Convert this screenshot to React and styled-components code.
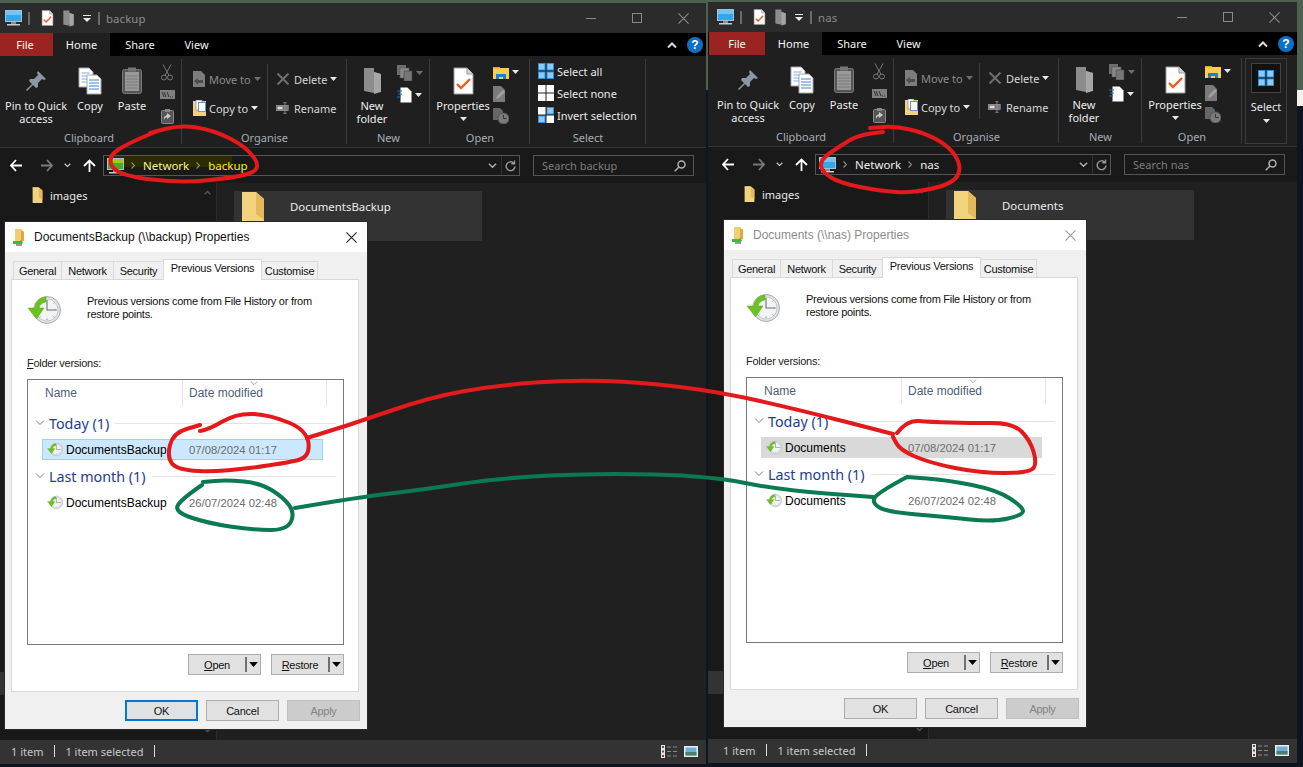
import React from 'react';
import styled, { createGlobalStyle } from 'styled-components';

const Global = createGlobalStyle`
  html, body { margin: 0; padding: 0; background: #0e1420; }
  * { box-sizing: border-box; }
`;

const UI = `"Noto Sans", "Liberation Sans", sans-serif`;
const DLG = `"Liberation Sans", Arial, sans-serif`;

/* ---------- icons ---------- */
const Monitor = ({ tint }) => (
  <svg width="17" height="16" viewBox="0 0 17 16">
    <rect x="0.5" y="0.5" width="16" height="11" fill={tint ? '#3fae2e' : '#35a6ea'} stroke="#9fc4d8" />
    <rect x="1" y="1" width="15" height="4" fill={tint ? '#a5c90f' : '#6fc6f5'} />
    <rect x="6" y="12" width="5" height="2" fill="#8a8f94" />
    <rect x="2" y="14" width="13" height="1.5" fill="#c9ccd0" />
  </svg>
);
const DocCheck = ({ w = 13, h = 16 }) => (
  <svg width={w} height={h} viewBox="0 0 21 28">
    <path d="M1 1h13l6 6v20H1z" fill="#fff" stroke="#9a9a9a" />
    <path d="M14 1v6h6" fill="#d5d5d5" stroke="#9a9a9a" />
    <path d="M4 17l4 4 9-9" fill="none" stroke="#f25a1d" strokeWidth="2.4" />
  </svg>
);
const GrayFolder = ({ w = 13, h = 17 }) => (
  <svg width={w} height={h} viewBox="0 0 19 28">
    <path d="M1 1l10 0 0 4 7 2v18l-7-2v3L1 24z" fill="#8c8c8c" />
    <path d="M11 5l7 2v18l-7 2z" fill="#a6a6a6" />
  </svg>
);
const YellowFolder = ({ w = 13, h = 16, clip }) => (
  <svg width={w} height={h} viewBox="0 0 24 36">
    <path d="M1 1h14l8 7v28H1z" fill="#f3d27e" />
    <path d="M15 1v22l8 6V8z" fill="#e4b95c" />
    {clip ? null : <path d="M1 1h14v2H1z" fill="#f8e2a4" />}
  </svg>
);
const Pin = () => (
  <svg width="22" height="22" viewBox="0 0 22 22">
    <path d="M13 1l8 8-2 1-2-1-4 4 0 4-2 1-3-3-6 6-1-1 6-6-3-3 1-2 4 0 4-4-1-2z" fill="#8d97a3" />
  </svg>
);
const CopyIcon = () => (
  <svg width="24" height="28" viewBox="0 0 24 28">
    <path d="M1 1h10l4 4v15H1z" fill="#fff" stroke="#a6a6a6" />
    <path d="M3.5 6h8M3.5 9h8M3.5 12h8M3.5 15h8" stroke="#7db0e8" />
    <path d="M9 8h10l4 4v15H9z" fill="#fff" stroke="#a6a6a6" />
    <path d="M11 13h10M11 16h10M11 19h10M11 22h10" stroke="#3f85dc" />
  </svg>
);
const Paste = () => (
  <svg width="20" height="27" viewBox="0 0 20 27">
    <rect x="0.5" y="2.5" width="19" height="24" rx="2" fill="#555" stroke="#777" />
    <rect x="3" y="5" width="14" height="19" fill="#999" />
    <path d="M4 9h12M4 12h12M4 15h12M4 18h12M4 21h12" stroke="#7a7a7a" />
    <rect x="6" y="0.5" width="8" height="4" fill="#777" />
  </svg>
);
const Scissors = () => (
  <svg width="12" height="17" viewBox="0 0 12 17" fill="none" stroke="#787878">
    <circle cx="3" cy="13.5" r="2.5" />
    <circle cx="9" cy="13.5" r="2.5" />
    <path d="M8 11.5L2 0.5M4 11.5L10 0.5" />
  </svg>
);
const PathIcon = () => (
  <svg width="15" height="9" viewBox="0 0 15 9">
    <rect width="15" height="9" fill="#808080" />
    <path d="M2 2l2 5M4 2l2 5M7 2l2 5M10 7h1M12 7h1" stroke="#333" />
  </svg>
);
const ShortcutIcon = () => (
  <svg width="13" height="15" viewBox="0 0 13 15">
    <rect x="0.5" y="1.5" width="12" height="13" rx="1" fill="#555" stroke="#888" />
    <rect x="4" y="0" width="5" height="3" fill="#888" />
    <path d="M3 11l0-3 3-2 0-2 4 3-4 3 0-2-2 1z" fill="#ccc" />
  </svg>
);
const MoveIcon = () => (
  <svg width="14" height="16" viewBox="0 0 14 16">
    <path d="M1 0h8l4 4v12H1z" fill="#7d7d7d" />
    <path d="M2 10l4-3v2h5v3H6v2z" fill="#4d4d4d" />
  </svg>
);
const CopyToIcon = () => (
  <svg width="13" height="16" viewBox="0 0 13 16">
    <rect y="1" width="13" height="15" fill="#f3d27e" />
    <rect x="3" y="0" width="6" height="10" fill="#fff" stroke="#888" strokeWidth="0.7" />
    <rect x="5.5" y="2.5" width="7" height="9" fill="#fff" stroke="#4d7fc0" strokeWidth="0.8" />
  </svg>
);
const XIcon = () => (
  <svg width="12" height="12" viewBox="0 0 12 12" stroke="#6f6f6f" strokeWidth="2">
    <path d="M0.5 0.5l11 11M11.5 0.5l-11 11" />
  </svg>
);
const RenameIcon = () => (
  <svg width="16" height="14" viewBox="0 0 16 14">
    <rect y="4" width="15" height="6" fill="#777" stroke="#999" />
    <rect x="2" y="5.5" width="6" height="3" fill="#ddd" />
    <path d="M11 0.5v13M9 0.5h4M9 13.5h4" stroke="#999" />
  </svg>
);
const CopyPlain = () => (
  <svg width="16" height="16" viewBox="0 0 16 16">
    <rect x="0" y="0" width="9" height="10" fill="#6e6e6e" />
    <rect x="3" y="3" width="9" height="10" fill="#8a8a8a" stroke="#555" strokeWidth="0.6" />
    <rect x="7" y="6" width="8" height="10" fill="#777" stroke="#444" strokeWidth="0.6" />
  </svg>
);
const NewDoc = () => (
  <svg width="15" height="16" viewBox="0 0 15 16">
    <path d="M3.5 0.5h7l4 4v11h-11z" fill="#fff" />
    <path d="M0 4h5M1 7h4M0 10h4" stroke="#1e73c8" strokeWidth="1.1" />
  </svg>
);
const ExplorerIcon = () => (
  <svg width="16" height="13" viewBox="0 0 16 13">
    <path d="M0 1h6l1 1h9v11H0z" fill="#f6ce54" />
    <rect y="1" width="7" height="1.5" fill="#e0a92e" />
    <path d="M3 8h10v5h-3v-2H6v2H3z" fill="#1c7fd6" />
  </svg>
);
const EditDoc = () => (
  <svg width="13" height="16" viewBox="0 0 13 16">
    <path d="M0 0h8l4 4v12H0z" fill="#7a7a7a" />
    <path d="M3 13l1-3 6-6 2 2-6 6z" fill="#a0a0a0" />
  </svg>
);
const HistoryDoc = () => (
  <svg width="16" height="16" viewBox="0 0 16 16">
    <path d="M0 0h7l3 3v9H0z" fill="#666" />
    <circle cx="10.5" cy="10.5" r="5.5" fill="#7b7b7b" stroke="#555" />
    <path d="M10.5 7v3.5h3" stroke="#333" fill="none" />
  </svg>
);
const Grid = ({ fills }) => (
  <svg width="16" height="16" viewBox="0 0 16 16">
    {[[0, 0], [8.5, 0], [0, 8.5], [8.5, 8.5]].map(([x, y], i) => (
      <rect key={i} x={x + 0.5} y={y + 0.5} width="6.5" height="6.5" fill={fills[i]} stroke={fills[i] === '#fff' ? '#fff' : '#2e8fe0'} />
    ))}
  </svg>
);
const Caret = ({ color = '#e8e8e8', w = 7, h = 4 }) => (
  <svg width={w} height={h} viewBox="0 0 7 4"><path d="M0 0h7L3.5 4z" fill={color} /></svg>
);
const QatArrow = () => (
  <svg width="8" height="7" viewBox="0 0 8 7"><path d="M0 0h8v1H0zM0 3h8L4 7z" fill="#e8e8e8" /></svg>
);
const Arrow = ({ dir = 'left', color = '#fff' }) => {
  const d = { left: 'M1 6.5h11M6 1L1 6.5 6 12', right: 'M1 6.5h11M7 1l5 5.5L7 12', up: 'M6.5 13V2M1 7l5.5-5.5L12 7' }[dir];
  return <svg width="13" height="14" viewBox="0 0 13 14" fill="none" stroke={color} strokeWidth="1.8"><path d={d} /></svg>;
};
const Chevron = ({ up, color = '#d8d8d8', w = 7, h = 5, sw = 1.6 }) => (
  <svg width={w} height={h} viewBox="0 0 10 6" fill="none" stroke={color} strokeWidth={sw}>
    <path d={up ? 'M1 5.5L5 1.5l4 4' : 'M1 .5l4 4 4-4'} />
  </svg>
);
const Crumb = () => (
  <svg width="4" height="7" viewBox="0 0 4 7"><path d="M0.5 0.5l3 3-3 3" fill="none" stroke="#8a8a8a" strokeWidth="1.2" /></svg>
);
const Refresh = () => (
  <svg width="11" height="12" viewBox="0 0 11 12" fill="none" stroke="#9a9a9a" strokeWidth="1.4">
    <path d="M8.8 3.2A4.4 4.4 0 1 0 10 6.5" /><path d="M9.5 0.5v3.2H6.3" />
  </svg>
);
const Search = () => (
  <svg width="12" height="12" viewBox="0 0 12 12" fill="none" stroke="#b0b0b0" strokeWidth="1.5">
    <circle cx="7.5" cy="4.5" r="3.5" /><path d="M5 7l-4.3 4.3" />
  </svg>
);
const DetailsIcon = () => (
  <svg width="16" height="13" viewBox="0 0 16 13">
    <rect width="4" height="13" fill="#e6e6e6" />
    <rect x="1" y="1" width="2" height="2" fill="#555" /><rect x="1" y="5.5" width="2" height="2" fill="#555" /><rect x="1" y="10" width="2" height="2" fill="#a03030" />
    <path d="M6 2h4M12 2h4M6 6.5h4M12 6.5h4M6 11h4M12 11h4" stroke="#8a8a8a" />
  </svg>
);
const ThumbIcon = () => (
  <svg width="14" height="11" viewBox="0 0 14 11">
    <rect width="14" height="11" fill="#e8eef4" />
    <rect x="1.5" y="1.5" width="11" height="8" fill="#6fb0d8" />
    <rect x="1.5" y="6" width="11" height="3.5" fill="#4b7f68" />
  </svg>
);
const ClockIcon = ({ w, h }) => (
  <svg width={w} height={h} viewBox="0 0 34 30">
    <circle cx="20" cy="15" r="13.5" fill="#dfe3e6" stroke="#a9aeb2" />
    <circle cx="20" cy="15" r="11" fill="#f1f3f4" stroke="#c6cacd" />
    <path d="M30 15h-1.5M20 25v-1.5M12.5 22.5l1-1M27.5 22.5l-1-1M27.5 7.5l-1 1" stroke="#8d9296" />
    <path d="M20 5v10h9" fill="none" stroke="#6a7075" strokeWidth="1.1" />
    <path d="M19 2C12 3 8.5 7 8 13H1l8.5 11L17 13h-5c.5-3 3-5.5 7-6z" fill="#6cc21f" stroke="#55a315" strokeWidth="0.5" />
  </svg>
);
const DialogFolder = () => (
  <svg width="14" height="17" viewBox="0 0 14 17">
    <path d="M2 0h6l3 3v9H2z" fill="#f1cf72" />
    <path d="M8 1v12l3-1V3z" fill="#dca83f" />
    <path d="M0 12h7l1-1 2 2.5-2 2.5-1-1H0z" fill="#46b53b" />
    <path d="M3 15h6v2H3z" fill="#9a9a9a" />
  </svg>
);
const CloseX = ({ color }) => (
  <svg width="11" height="11" viewBox="0 0 11 11" stroke={color} strokeWidth="1.1"><path d="M0.4 0.4l10.2 10.2M10.6 0.4L0.4 10.6" /></svg>
);

/* ---------- explorer window ---------- */
const Desktop = styled.div`
  position: relative;
  width: 1303px;
  height: 767px;
  overflow: hidden;
  background: linear-gradient(#4c614f 0 90px, #0e1420 90px);
`;
const Sticker = styled.div`
  position: absolute;
  left: 1297px;
  top: 90px;
  width: 6px;
  height: 16px;
  background: #f4f2ee;
`;
const Win = styled.div`
  position: absolute;
  left: ${p => p.$x}px;
  top: ${p => p.$y}px;
  width: ${p => p.$w}px;
  height: 761px;
  display: flex;
  flex-direction: column;
  background: #202020;
  font-family: ${UI};
  font-size: 11px;
  color: #e8e8e8;
`;
const TitleBar = styled.div`
  height: 30px;
  flex: none;
  display: flex;
  align-items: center;
  padding-left: 9px;
  background: #2b2b2b;
`;
const QatSep = styled.span`
  width: 2px;
  height: 13px;
  margin-left: ${p => p.$l || 0}px;
  background: #6a6a6a;
`;
const QatSlot = styled.span`
  display: flex;
  margin-left: ${p => p.$l}px;
`;
const WinTitle = styled.span`
  margin-left: 6px;
  font-size: 11.4px;
  letter-spacing: 0.1px;
  color: #8b8b8b;
  flex: 1;
`;
const WinButton = styled.span`
  width: 46px;
  display: flex;
  justify-content: center;
  align-items: center;
  height: 30px;
`;
const MinGlyph = styled.span`
  width: 10px;
  height: 1px;
  background: #8a8a8a;
`;
const MaxGlyph = styled.span`
  width: 10px;
  height: 10px;
  border: 1px solid #8a8a8a;
`;
const TabRow = styled.div`
  height: 23px;
  flex: none;
  display: flex;
  align-items: stretch;
  padding-left: 1px;
  background: #000;
`;
const FileTab = styled.div`
  width: 56px;
  display: flex;
  align-items: center;
  justify-content: center;
  background: #9b2423;
  color: #f2f2f2;
  padding-bottom: 1px;
`;
const RibbonTab = styled.div`
  width: ${p => p.$w}px;
  display: flex;
  align-items: center;
  justify-content: center;
  padding-bottom: 1px;
  background: ${p => (p.$active ? '#1f1f1f' : 'transparent')};
  color: #f2f2f2;
`;
const TabSpacer = styled.div`
  flex: 1;
`;
const RibbonTools = styled.div`
  display: flex;
  align-items: center;
  gap: 10px;
  padding-right: 3px;
`;
const HelpDot = styled.span`
  width: 16px;
  height: 16px;
  border-radius: 50%;
  background: #0f6fc6;
  color: #fff;
  font: bold 12px/16px ${DLG};
  text-align: center;
`;
const Ribbon = styled.div`
  height: 92px;
  flex: none;
  display: flex;
  padding-top: 3px;
  background: #1f1f1f;
  border-bottom: 1px solid #333;
`;
const Group = styled.div`
  position: relative;
  width: ${p => p.$w}px;
  display: flex;
  flex-direction: column;
  &::after {
    content: '';
    position: absolute;
    top: 0;
    right: 0;
    bottom: 3px;
    width: 1px;
    background: #3c3c3c;
  }
`;
const GroupBody = styled.div`
  flex: 1;
  display: flex;
  padding: 5px 0 0 ${p => p.$pl || 0}px;
`;
const GroupLabel = styled.div`
  height: 18px;
  line-height: 18px;
  text-align: center;
  color: #a5aeb5;
`;
const Big = styled.div`
  width: ${p => p.$w}px;
  display: flex;
  flex-direction: column;
  align-items: center;
  text-align: center;
  line-height: 13px;
  color: #ececec;
  white-space: nowrap;
`;
const BigIcon = styled.div`
  height: 33px;
  margin-bottom: 2px;
  display: flex;
  align-items: center;
`;
const BigCaret = styled.div`
  display: flex;
  margin-top: 5px;
`;
const SmallCol = styled.div`
  width: ${p => p.$w}px;
  padding-top: ${p => p.$pt || 0}px;
  display: flex;
  flex-direction: column;
  gap: ${p => p.$gap || 0}px;
  align-items: ${p => p.$align || 'center'};
`;
const SmallIcon = styled.div`
  height: 16px;
  display: flex;
  align-items: center;
  gap: 3px;
`;
const OrgCol = styled.div`
  display: flex;
  flex-direction: column;
  gap: 13px;
  width: ${p => p.$w}px;
  padding-top: 7px;
  padding-left: ${p => p.$pl}px;
  height: 56px;
  border-right: ${p => (p.$sep ? '1px solid #3c3c3c' : 'none')};
`;
const OrgRow = styled.div`
  height: 16px;
  display: flex;
  align-items: center;
  gap: 3px;
  color: ${p => (p.$dim ? '#8c8c8c' : '#d8d8d8')};
`;
const OrgIcon = styled.span`
  display: flex;
  width: ${p => p.$w || 14}px;
  margin-right: ${p => p.$gap || 0}px;
  justify-content: center;
`;
const SelectRow = styled.div`
  height: 16px;
  display: flex;
  align-items: center;
  gap: 3px;
`;
const SelectCol = styled.div`
  display: flex;
  flex-direction: column;
  gap: 6px;
  margin-top: -1px;
`;
const Collapsed = styled.div`
  width: 42px;
  margin-left: 3px;
  height: 86px;
  border: 1px solid #3c3c3c;
  display: flex;
  flex-direction: column;
  align-items: center;
  padding-top: 4px;
`;
const CollapsedIcon = styled.div`
  width: 30px;
  height: 30px;
  display: flex;
  align-items: center;
  justify-content: center;
  background: #111;
  border: 1px solid #444;
  margin-bottom: 6px;
`;
const NavRow = styled.div`
  height: 35px;
  flex: none;
  display: flex;
  align-items: center;
  background: #191919;
  padding-right: 12px;
`;
const NavBtn = styled.span`
  display: flex;
  justify-content: center;
  width: ${p => p.$w}px;
`;
const Address = styled.div`
  flex: 1;
  height: 21px;
  margin-left: 4px;
  display: flex;
  align-items: center;
  padding-left: 3px;
  border: 1px solid #555;
  background: #191919;
`;
const Highlight = styled.div`
  display: flex;
  align-items: center;
  gap: 7px;
  flex: 1;
  height: 100%;
  font-size: 11.5px;
  background: ${p => (p.$on ? 'linear-gradient(#2c2c00, #2c2c00) 0 0 / 125px 60% no-repeat' : 'none')};
`;
const CrumbLink = styled.span`
  color: ${p => p.$color || '#ededed'};
  line-height: 19px;
  padding-left: 1px;
`;
const AddrEnd = styled.div`
  display: flex;
  align-items: center;
  height: 100%;
`;
const AddrChevron = styled.span`
  width: 17px;
  display: flex;
  justify-content: center;
`;
const AddrRefresh = styled.span`
  width: 18px;
  height: 100%;
  display: flex;
  align-items: center;
  justify-content: center;
  border-left: 1px solid #333;
`;
const SearchBox = styled.div`
  width: 161px;
  height: 21px;
  margin-left: 13px;
  display: flex;
  align-items: center;
  justify-content: space-between;
  padding: 0 7px 0 8px;
  border: 1px solid #555;
  color: #7d7d7d;
`;
const Main = styled.div`
  flex: 1;
  display: flex;
  min-height: 0;
  background: #202020;
`;
const NavPane = styled.div`
  width: 221px;
  flex: none;
  display: flex;
  background: #191919;
  border-right: 1px solid #2c2c2c;
`;
const NavList = styled.div`
  flex: 1;
  display: flex;
  flex-direction: column;
  padding: 3px 0 45px 35px;
`;
const NavItem = styled.div`
  height: 18px;
  display: flex;
  align-items: center;
  gap: 6px;
`;
const NavSelected = styled.div`
  height: 23px;
  margin: auto 0 0 -35px;
  background: #333;
`;
const ScrollCol = styled.div`
  width: 17px;
  display: flex;
  flex-direction: column;
  justify-content: space-between;
  align-items: center;
  padding: 7px 0;
`;
const Content = styled.div`
  flex: 1;
  padding: 8px 17px;
`;
const Tile = styled.div`
  width: 248px;
  height: 50px;
  display: flex;
  padding-left: 7px;
  background: #333;
`;
const TileName = styled.span`
  margin-left: 25px;
  margin-top: 8px;
  font-size: 11.4px;
  color: #ececec;
`;
const Status = styled.div`
  height: 24px;
  flex: none;
  display: flex;
  align-items: center;
  padding: 0 8px 2px 15px;
  background: #333;
  color: #c8c8c8;
`;
const StatusSep = styled.span`
  width: 1px;
  height: 12px;
  margin: 0 ${p => p.$r || 0}px 0 ${p => p.$l || 0}px;
  background: #ddd;
`;
const StatusEnd = styled.div`
  margin-left: auto;
  display: flex;
  align-items: center;
  gap: 7px;
`;

const OrganiseGroup = () => (
  <Group $w={165}>
    <GroupBody $pl={10}>
      <OrgCol $w={76} $pl={0} $sep>
        <OrgRow $dim>
          <OrgIcon><MoveIcon /></OrgIcon>Move to <Caret color="#6e6e6e" />
        </OrgRow>
        <OrgRow>
          <OrgIcon><CopyToIcon /></OrgIcon>Copy to <Caret />
        </OrgRow>
      </OrgCol>
      <OrgCol $w={78} $pl={8}>
        <OrgRow>
          <OrgIcon $w={13} $gap={2}><XIcon /></OrgIcon>Delete <Caret />
        </OrgRow>
        <OrgRow>
          <OrgIcon $w={13} $gap={2}><RenameIcon /></OrgIcon>Rename
        </OrgRow>
      </OrgCol>
    </GroupBody>
    <GroupLabel>Organise</GroupLabel>
  </Group>
);

const Explorer = ({ x, y, w, name, item, marked, collapsed }) => (
  <Win $x={x} $y={y} $w={w}>
    <TitleBar>
      <Monitor />
      <QatSep $l={6} />
      <QatSlot $l={11}><DocCheck /></QatSlot>
      <QatSlot $l={8}><GrayFolder /></QatSlot>
      <QatSlot $l={8}><QatArrow /></QatSlot>
      <QatSep $l={7} />
      <WinTitle>{name}</WinTitle>
      <WinButton><MinGlyph /></WinButton>
      <WinButton><MaxGlyph /></WinButton>
      <WinButton><CloseX color="#8a8a8a" /></WinButton>
    </TitleBar>
    <TabRow>
      <FileTab>File</FileTab>
      <RibbonTab $w={57} $active>Home</RibbonTab>
      <RibbonTab $w={60}>Share</RibbonTab>
      <RibbonTab $w={53}>View</RibbonTab>
      <TabSpacer />
      <RibbonTools>
        <Chevron up color="#dcdcdc" w={10} h={6} sw={2} />
        <HelpDot>?</HelpDot>
      </RibbonTools>
    </TabRow>
    <Ribbon>
      <Group $w={186}>
        <GroupBody $pl={8}>
          <Big $w={64}><BigIcon><Pin /></BigIcon>Pin to Quick<br />access</Big>
          <Big $w={44}><BigIcon><CopyIcon /></BigIcon>Copy</Big>
          <Big $w={40}><BigIcon><Paste /></BigIcon>Paste</Big>
          <SmallCol $w={30} $gap={6}>
            <SmallIcon><Scissors /></SmallIcon>
            <SmallIcon><PathIcon /></SmallIcon>
            <SmallIcon><ShortcutIcon /></SmallIcon>
          </SmallCol>
        </GroupBody>
        <GroupLabel>Clipboard</GroupLabel>
      </Group>
      <OrganiseGroup />
      <Group $w={83}>
        <GroupBody>
          <Big $w={50}><BigIcon><GrayFolder w={19} h={28} /></BigIcon>New<br />folder</Big>
          <SmallCol $w={30} $gap={6} $pt={1} $align="flex-start">
            <SmallIcon><CopyPlain /><Caret color="#6e6e6e" /></SmallIcon>
            <SmallIcon><NewDoc /><Caret /></SmallIcon>
          </SmallCol>
        </GroupBody>
        <GroupLabel>New</GroupLabel>
      </Group>
      <Group $w={100}>
        <GroupBody $pl={3}>
          <Big $w={60}>
            <BigIcon><DocCheck w={21} h={28} /></BigIcon>Properties
            <BigCaret><Caret /></BigCaret>
          </Big>
          <SmallCol $w={30} $gap={6} $align="flex-start">
            <SmallIcon><ExplorerIcon /><Caret /></SmallIcon>
            <SmallIcon><EditDoc /></SmallIcon>
            <SmallIcon><HistoryDoc /></SmallIcon>
          </SmallCol>
        </GroupBody>
        <GroupLabel>Open</GroupLabel>
      </Group>
      {collapsed ? (
        <Collapsed>
          <CollapsedIcon><Grid fills={['#8fcaf5', '#8fcaf5', '#8fcaf5', '#8fcaf5']} /></CollapsedIcon>
          <span>Select</span>
          <BigCaret><Caret /></BigCaret>
        </Collapsed>
      ) : (
        <Group $w={116}>
          <GroupBody $pl={8}>
            <SelectCol>
              <SelectRow><Grid fills={['#8fcaf5', '#8fcaf5', '#8fcaf5', '#8fcaf5']} />Select all</SelectRow>
              <SelectRow><Grid fills={['#fff', '#fff', '#fff', '#fff']} />Select none</SelectRow>
              <SelectRow><Grid fills={['#fff', '#8fcaf5', '#8fcaf5', '#fff']} />Invert selection</SelectRow>
            </SelectCol>
          </GroupBody>
          <GroupLabel>Select</GroupLabel>
        </Group>
      )}
    </Ribbon>
    <NavRow>
      <NavBtn $w={40}><Arrow /></NavBtn>
      <NavBtn $w={20}><Arrow dir="right" color="#7a7a7a" /></NavBtn>
      <NavBtn $w={23}><Chevron /></NavBtn>
      <NavBtn $w={20}><Arrow dir="up" /></NavBtn>
      <Address>
        <Highlight $on={marked}>
          <Monitor tint={marked} />
          <Crumb />
          <CrumbLink $color={marked ? '#f6f68a' : undefined}>Network</CrumbLink>
          <Crumb />
          <CrumbLink $color={marked ? '#ffee00' : undefined}>{name}</CrumbLink>
        </Highlight>
        <AddrEnd>
          <AddrChevron><Chevron color="#b0b0b0" w={9} h={6} /></AddrChevron>
          <AddrRefresh><Refresh /></AddrRefresh>
        </AddrEnd>
      </Address>
      <SearchBox>Search {name}<Search /></SearchBox>
    </NavRow>
    <Main>
      <NavPane>
        <NavList>
          <NavItem><YellowFolder />images</NavItem>
          <NavSelected />
        </NavList>
        <ScrollCol>
          <Chevron up color="#555" w={7} h={5} sw={2} />
          <Chevron color="#555" w={7} h={5} sw={2} />
        </ScrollCol>
      </NavPane>
      <Content>
        <Tile>
          <YellowFolder w={24} h={36} clip />
          <TileName>{item}</TileName>
        </Tile>
      </Content>
    </Main>
    <Status>
      1 item<StatusSep $l={11} $r={10} />1 item selected<StatusSep $l={10} />
      <StatusEnd><DetailsIcon /><ThumbIcon /></StatusEnd>
    </Status>
  </Win>
);

/* ---------- properties dialog ---------- */
const Dialog = styled.div`
  position: absolute;
  left: ${p => p.$x}px;
  top: ${p => p.$y}px;
  width: 362px;
  height: 507px;
  display: flex;
  flex-direction: column;
  background: #f0f0f0;
  font-family: ${DLG};
  font-size: 11px;
  letter-spacing: -0.27px;
  color: #111;
  box-shadow: 0 0 0 1px #2a2a2a;
`;
const DialogTitle = styled.div`
  height: 30px;
  flex: none;
  display: flex;
  align-items: center;
  padding: 0 10px 0 8px;
  background: #fff;
`;
const DialogName = styled.span`
  flex: 1;
  margin-left: 7px;
  font-size: 12px;
  letter-spacing: 0;
  color: ${p => (p.$dim ? '#8c8c8c' : '#111')};
`;
const DlgTabs = styled.div`
  display: flex;
  align-items: flex-end;
  height: 28px;
  padding-left: 8px;
  position: relative;
  z-index: 1;
`;
const DlgTab = styled.div`
  width: ${p => p.$w}px;
  height: ${p => (p.$on ? 21 : 19)}px;
  display: flex;
  align-items: center;
  justify-content: center;
  background: ${p => (p.$on ? '#fff' : '#f0f0f0')};
  border: 1px solid #d9d9d9;
  border-bottom: ${p => (p.$on ? 'none' : '1px solid #d9d9d9')};
  margin-right: -1px;
  padding: ${p => (p.$on ? '0 0 4px' : '1px 0 0')};
`;
const Panel = styled.div`
  margin: -1px 8px 0 6px;
  height: 413px;
  flex: none;
  padding: 15px 14px 0 15px;
  background: #fff;
  border: 1px solid #d9d9d9;
`;
const Intro = styled.div`
  display: flex;
  gap: 26px;
  height: 61px;
`;
const IntroText = styled.div`
  line-height: 13px;
  width: 240px;
`;
const FieldLabel = styled.div`
  height: 23px;
  line-height: 14px;
  color: #222;
`;
const UnderlineKey = styled.span`
  text-decoration: ${p => (p.$on ? 'underline' : 'none')};
`;
const List = styled.div`
  height: 266px;
  border: 1px solid #7a7a7a;
  background: #fff;
`;
const ListHead = styled.div`
  height: 26px;
  display: grid;
  grid-template-columns: 155px 144px 1fr;
  font-size: 12px;
  letter-spacing: 0;
  color: #4c607a;
`;
const HeadCell = styled.div`
  position: relative;
  padding: 6px 0 0 ${p => p.$pl}px;
  border-right: 1px solid #e5e5e5;
  &:last-child { border-right: none; }
`;
const SortMark = styled.span`
  position: absolute;
  left: 67px;
  top: 1px;
  display: flex;
`;
const GroupHead = styled.div`
  display: flex;
  align-items: center;
  height: 20px;
  margin-top: ${p => p.$mt}px;
  margin-right: 7px;
  padding: 0 0 2px 7px;
  gap: 4px;
  color: #1d3c96;
  font-family: ${UI};
  font-size: 14.3px;
  letter-spacing: 0;
`;
const GroupLine = styled.span`
  flex: 1;
  height: 1px;
  margin-left: 2px;
  background: #e3e3e3;
`;
const Row = styled.div`
  margin: 5px 0 0 14px;
  width: 281px;
  height: 21px;
  display: grid;
  grid-template-columns: 146px 1fr;
  align-items: center;
  background: ${p => (p.$sel === 'blue' ? '#cce8ff' : p.$sel === 'gray' ? '#d9d9d9' : 'transparent')};
  border: 1px solid ${p => (p.$sel === 'blue' ? '#99d1ff' : 'transparent')};
`;
const RowName = styled.div`
  display: flex;
  align-items: center;
  gap: 3px;
  padding-left: 4px;
  font-size: 12px;
  letter-spacing: 0;
  color: #000;
`;
const RowDate = styled.div`
  font-size: 11.3px;
  letter-spacing: 0;
  color: #6d6d6d;
`;
const PanelButtons = styled.div`
  display: flex;
  justify-content: flex-end;
  gap: 10px;
  margin-top: 9px;
`;
const SplitBtn = styled.div`
  width: 73px;
  height: 21px;
  display: flex;
  align-items: center;
  background: #e1e1e1;
  border: 1px solid #adadad;
`;
const SplitLabel = styled.span`
  flex: 1;
  text-align: center;
`;
const SplitArrow = styled.span`
  width: 15px;
  height: 15px;
  display: flex;
  align-items: center;
  justify-content: center;
  border-left: 2px solid #707070;
`;
const DlgFooter = styled.div`
  flex: 1;
  display: flex;
  justify-content: flex-end;
  align-items: flex-start;
  gap: 8px;
  padding: 8px 7px 0 0;
`;
const Btn = styled.div`
  width: 73px;
  height: 21px;
  display: flex;
  align-items: center;
  justify-content: center;
  background: ${p => (p.$off ? '#cccccc' : '#e1e1e1')};
  border: ${p => (p.$primary ? '2px solid #0078d7' : p.$off ? '1px solid #bfbfbf' : '1px solid #adadad')};
  color: ${p => (p.$off ? '#838383' : '#111')};
`;

const PropsDialog = ({ x, y, title, name, dim, sel, accel }) => (
  <Dialog $x={x} $y={y}>
    <DialogTitle>
      <DialogFolder />
      <DialogName $dim={dim}>{title}</DialogName>
      <CloseX color={dim ? '#9a9a9a' : '#222'} />
    </DialogTitle>
    <DlgTabs>
      <DlgTab $w={49}>General</DlgTab>
      <DlgTab $w={53}>Network</DlgTab>
      <DlgTab $w={51}>Security</DlgTab>
      <DlgTab $w={99} $on>Previous Versions</DlgTab>
      <DlgTab $w={57}>Customise</DlgTab>
    </DlgTabs>
    <Panel>
      <Intro>
        <ClockIcon w={34} h={30} />
        <IntroText>Previous versions come from File History or from restore points.</IntroText>
      </Intro>
      <FieldLabel><UnderlineKey $on={accel}>F</UnderlineKey>older versions:</FieldLabel>
      <List>
        <ListHead>
          <HeadCell $pl={17}>Name</HeadCell>
          <HeadCell $pl={6}>
            Date modified
            <SortMark><Chevron color="#8a9099" w={8} h={5} sw={1} /></SortMark>
          </HeadCell>
          <HeadCell $pl={0} />
        </ListHead>
        <GroupHead $mt={8}>
          <Chevron color="#7a7a7a" w={10} h={6} sw={1} />Today (1)<GroupLine />
        </GroupHead>
        <Row $sel={sel}>
          <RowName><ClockIcon w={16} h={15} />{name}</RowName>
          <RowDate>07/08/2024 01:17</RowDate>
        </Row>
        <GroupHead $mt={7}>
          <Chevron color="#7a7a7a" w={10} h={6} sw={1} />Last month (1)<GroupLine />
        </GroupHead>
        <Row>
          <RowName><ClockIcon w={16} h={15} />{name}</RowName>
          <RowDate>26/07/2024 02:48</RowDate>
        </Row>
      </List>
      <PanelButtons>
        <SplitBtn>
          <SplitLabel><UnderlineKey $on>O</UnderlineKey>pen</SplitLabel>
          <SplitArrow><Caret color="#000" w={9} h={5} /></SplitArrow>
        </SplitBtn>
        <SplitBtn>
          <SplitLabel><UnderlineKey $on>R</UnderlineKey>estore</SplitLabel>
          <SplitArrow><Caret color="#000" w={9} h={5} /></SplitArrow>
        </SplitBtn>
      </PanelButtons>
    </Panel>
    <DlgFooter>
      <Btn $primary={accel}>OK</Btn>
      <Btn>Cancel</Btn>
      <Btn $off>Apply</Btn>
    </DlgFooter>
  </Dialog>
);

/* ---------- pen annotations ---------- */
const Ink = styled.svg`
  position: absolute;
  left: 0;
  top: 0;
  pointer-events: none;
`;
const RED = '#e3191b';
const GREEN = '#0b7a50';
const strokes = [
  [RED, [[158, 131], [130, 142], [107, 157], [117, 175], [177, 183], [233, 178], [262, 170], [247, 147], [213, 130], [180, 125], [150, 133]]],
  [RED, [[883, 132], [860, 134], [840, 146], [820, 160], [822, 172], [840, 183], [880, 191], [912, 193], [953, 184], [962, 167], [950, 147], [925, 133], [895, 126], [870, 128]]],
  [RED, [[200, 431], [208, 430], [237, 413], [270, 415], [307, 430], [310, 457], [287, 463], [220, 472], [177, 470], [167, 457], [173, 433], [200, 425]]],
  [RED, [[307, 438], [350, 425], [430, 397], [500, 385], [570, 380], [640, 382], [720, 392], [800, 410], [893, 434]]],
  [RED, [[897, 433], [907, 420], [930, 422], [970, 423], [1013, 423], [1030, 440], [1037, 463], [1030, 473], [980, 473], [930, 463], [900, 450], [893, 437]]],
  [GREEN, [[202, 485], [180, 500], [175, 512], [207, 523], [253, 530], [287, 530], [295, 513], [283, 497], [260, 483], [227, 480], [203, 482]]],
  [GREEN, [[295, 508], [360, 497], [420, 490], [500, 478], [600, 473], [710, 476], [780, 490], [873, 497]]],
  [GREEN, [[907, 477], [877, 493], [872, 503], [887, 512], [947, 517], [993, 522], [1023, 515], [1023, 507], [997, 490], [947, 480], [907, 477]]],
];
const smooth = pts => {
  let d = `M${pts[0][0]} ${pts[0][1]}`;
  for (let i = 1; i < pts.length - 1; i++) {
    const mx = (pts[i][0] + pts[i + 1][0]) / 2;
    const my = (pts[i][1] + pts[i + 1][1]) / 2;
    d += ` Q${pts[i][0]} ${pts[i][1]} ${mx} ${my}`;
  }
  const last = pts[pts.length - 1];
  return `${d} L${last[0]} ${last[1]}`;
};
const Annotations = () => (
  <Ink width="1303" height="767" viewBox="0 0 1303 767" fill="none">
    {strokes.map(([color, pts], i) => (
      <path key={i} d={smooth(pts)} stroke={color} strokeWidth="4" strokeLinecap="round" strokeLinejoin="round" />
    ))}
  </Ink>
);

const App = () => (
  <Desktop>
    <Global />
    <Sticker />
    <Explorer x={-4} y={3} w={710} name="backup" item="DocumentsBackup" marked />
    <Explorer x={708} y={2} w={589} name="nas" item="Documents" collapsed />
    <PropsDialog x={5} y={222} title="DocumentsBackup (\\backup) Properties" name="DocumentsBackup" sel="blue" accel />
    <PropsDialog x={724} y={220} title="Documents (\\nas) Properties" name="Documents" sel="gray" dim />
    <Annotations />
  </Desktop>
);

export default App;
